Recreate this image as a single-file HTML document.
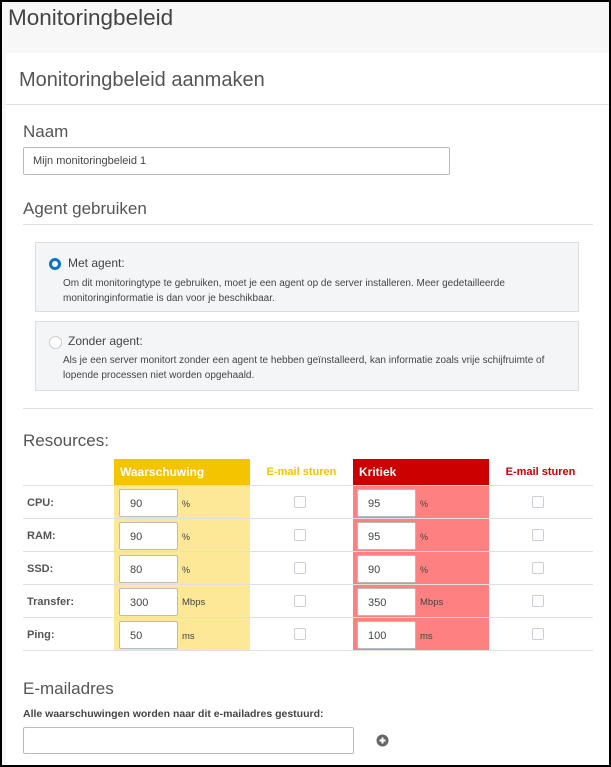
<!DOCTYPE html>
<html><head><style>
*{box-sizing:border-box;margin:0;padding:0}
body{width:611px;height:767px;overflow:hidden;font-family:"Liberation Sans",sans-serif;color:#444;background:#000}
.frame{position:absolute;left:2px;top:2px;width:607px;height:763px;background:#f7f7f7;overflow:hidden}
.abs{position:absolute}
.card{position:absolute;left:4px;top:51px;right:0;bottom:0;background:#fff}
.h{font-weight:normal;color:#555}
.inp{position:absolute;background:#fff;border:1px solid #bbb;border-radius:2px;font-size:11px;color:#444}
.box{position:absolute;left:33px;width:544px;background:#f4f5f7;border:1px solid #ddd}
.small{font-size:10px;color:#444;line-height:15px}
.line{position:absolute;height:1px;background:#dde1e5}
.cb{position:absolute;width:12px;height:12px;border:1px solid #ccd;border-radius:2px;background:#fff}
</style></head><body>
<div class="frame">
<div class="abs h" style="left:6px;top:3px;font-size:22.5px;color:#444">Monitoringbeleid</div>
<div class="card"></div>
<div class="abs h" style="left:17px;top:67px;font-size:20px">Monitoringbeleid aanmaken</div>
<div class="line" style="left:4px;right:0;top:102px"></div>
<div class="abs h" style="left:21px;top:120px;font-size:17px">Naam</div>
<div class="inp" style="left:21px;top:145px;width:427px;height:28px;padding:7px 9px">Mijn monitoringbeleid 1</div>
<div class="abs h" style="left:21px;top:197px;font-size:17px">Agent gebruiken</div>
<div class="line" style="left:21px;width:570px;top:222px"></div>
<div class="box" style="top:240px;height:70px">
 <div class="abs" style="left:13px;top:15px;width:12px;height:12px;border-radius:50%;background:#fff;border:3.5px solid #0c74c6"></div>
 <div class="abs" style="left:32px;top:13px;font-size:12px;color:#444">Met agent:</div>
 <div class="abs small" style="left:27px;top:33px;width:500px">Om dit monitoringtype te gebruiken, moet je een agent op de server installeren. Meer gedetailleerde monitoringinformatie is dan voor je beschikbaar.</div>
</div>
<div class="box" style="top:319px;height:70px">
 <div class="abs" style="left:13px;top:14px;width:13px;height:13px;border-radius:50%;background:#fff;border:1px solid #ccc"></div>
 <div class="abs" style="left:32px;top:12px;font-size:12px;color:#444">Zonder agent:</div>
 <div class="abs small" style="left:27px;top:31px;width:510px">Als je een server monitort zonder een agent te hebben geïnstalleerd, kan informatie zoals vrije schijfruimte of lopende processen niet worden opgehaald.</div>
</div>
<div class="line" style="left:21px;width:570px;top:406px"></div>
<div class="abs h" style="left:21px;top:429px;font-size:17px">Resources:</div>
<div class="abs" style="left:112px;top:457px;width:136px;height:192px;background:#fde898"></div>
<div class="abs" style="left:112px;top:457px;width:136px;height:26px;background:#f5c400;color:#fff;font-size:12px;font-weight:bold;padding:6px 6px">Waarschuwing</div>
<div class="abs" style="left:351px;top:457px;width:136px;height:192px;background:#ff8080"></div>
<div class="abs" style="left:351px;top:457px;width:136px;height:26px;background:#cc0000;color:#fff;font-size:12px;font-weight:bold;padding:6px 6px">Kritiek</div>
<div class="abs" style="left:248px;width:103px;top:464px;text-align:center;font-size:11px;font-weight:bold;color:#f5c400">E-mail sturen</div>
<div class="abs" style="left:487px;width:103px;top:464px;text-align:center;font-size:11px;font-weight:bold;color:#cc0000">E-mail sturen</div>
<div class="line" style="left:21px;width:570px;top:483px"></div>
<div class="line" style="left:21px;width:570px;top:516px"></div>
<div class="line" style="left:21px;width:570px;top:549px"></div>
<div class="line" style="left:21px;width:570px;top:582px"></div>
<div class="line" style="left:21px;width:570px;top:615px"></div>
<div class="line" style="left:21px;width:570px;top:648px"></div>

<div class="abs" style="left:25px;top:495px;font-size:11px;font-weight:bold;color:#555">CPU:</div>
<div class="inp" style="left:117px;top:487px;width:59px;height:28px;padding:8px 10px">90</div>
<div class="abs" style="left:180px;top:497px;font-size:9px">%</div>
<div class="cb" style="left:292px;top:494px"></div>
<div class="inp" style="left:355px;top:487px;width:59px;height:28px;padding:8px 10px">95</div>
<div class="abs" style="left:418px;top:497px;font-size:9px">%</div>
<div class="cb" style="left:530px;top:494px"></div>

<div class="abs" style="left:25px;top:528px;font-size:11px;font-weight:bold;color:#555">RAM:</div>
<div class="inp" style="left:117px;top:520px;width:59px;height:28px;padding:8px 10px">90</div>
<div class="abs" style="left:180px;top:530px;font-size:9px">%</div>
<div class="cb" style="left:292px;top:527px"></div>
<div class="inp" style="left:355px;top:520px;width:59px;height:28px;padding:8px 10px">95</div>
<div class="abs" style="left:418px;top:530px;font-size:9px">%</div>
<div class="cb" style="left:530px;top:527px"></div>

<div class="abs" style="left:25px;top:561px;font-size:11px;font-weight:bold;color:#555">SSD:</div>
<div class="inp" style="left:117px;top:553px;width:59px;height:28px;padding:8px 10px">80</div>
<div class="abs" style="left:180px;top:563px;font-size:9px">%</div>
<div class="cb" style="left:292px;top:560px"></div>
<div class="inp" style="left:355px;top:553px;width:59px;height:28px;padding:8px 10px">90</div>
<div class="abs" style="left:418px;top:563px;font-size:9px">%</div>
<div class="cb" style="left:530px;top:560px"></div>

<div class="abs" style="left:25px;top:594px;font-size:11px;font-weight:bold;color:#555">Transfer:</div>
<div class="inp" style="left:117px;top:586px;width:59px;height:28px;padding:8px 10px">300</div>
<div class="abs" style="left:180px;top:595px;font-size:9.5px">Mbps</div>
<div class="cb" style="left:292px;top:593px"></div>
<div class="inp" style="left:355px;top:586px;width:59px;height:28px;padding:8px 10px">350</div>
<div class="abs" style="left:418px;top:595px;font-size:9.5px">Mbps</div>
<div class="cb" style="left:530px;top:593px"></div>

<div class="abs" style="left:25px;top:627px;font-size:11px;font-weight:bold;color:#555">Ping:</div>
<div class="inp" style="left:117px;top:619px;width:59px;height:28px;padding:8px 10px">50</div>
<div class="abs" style="left:180px;top:629px;font-size:9.5px">ms</div>
<div class="cb" style="left:292px;top:626px"></div>
<div class="inp" style="left:355px;top:619px;width:59px;height:28px;padding:8px 10px">100</div>
<div class="abs" style="left:418px;top:629px;font-size:9.5px">ms</div>
<div class="cb" style="left:530px;top:626px"></div>

<div class="abs h" style="left:21px;top:677px;font-size:17px">E-mailadres</div>
<div class="abs" style="left:21px;top:706px;font-size:10.5px;font-weight:bold;color:#444">Alle waarschuwingen worden naar dit e-mailadres gestuurd:</div>
<div class="inp" style="left:21px;top:725px;width:331px;height:27px"></div>
<svg class="abs" style="left:374px;top:732px" width="13" height="13" viewBox="0 0 13 13"><circle cx="6.5" cy="6.5" r="6" fill="#666"/><path d="M6.5 3.5v6M3.5 6.5h6" stroke="#fff" stroke-width="2"/></svg>
</div>
</body></html>
